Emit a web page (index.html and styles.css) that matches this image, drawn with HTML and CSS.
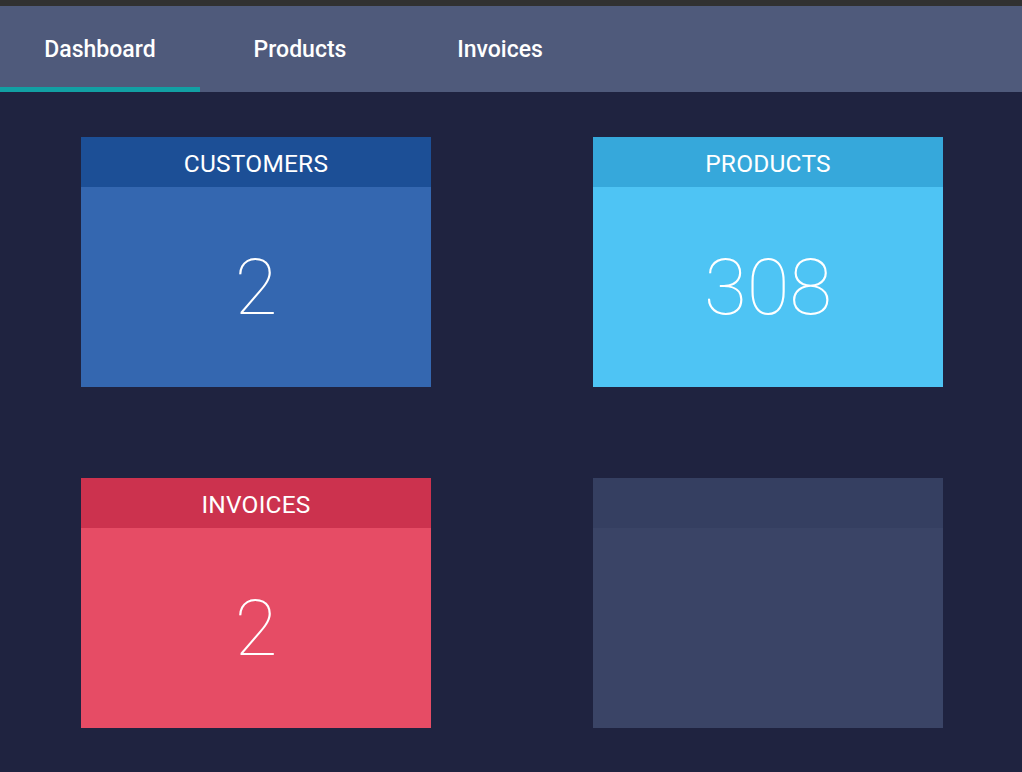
FILE: index.html
```html
<!DOCTYPE html>
<html>
<head>
<meta charset="utf-8">
<link rel="stylesheet" href="styles.css">
</head>
<body>
<div class="topbar"></div>
<nav class="nav">
  <a class="tab active">Dashboard</a>
  <a class="tab">Products</a>
  <a class="tab">Invoices</a>
</nav>
<main class="grid">
  <section class="card blue">
    <header class="card-head">CUSTOMERS</header>
    <div class="card-body">2</div>
  </section>
  <section class="card cyan">
    <header class="card-head">PRODUCTS</header>
    <div class="card-body">308</div>
  </section>
  <section class="card red">
    <header class="card-head">INVOICES</header>
    <div class="card-body">2</div>
  </section>
  <section class="card slate">
    <header class="card-head"></header>
    <div class="card-body"></div>
  </section>
</main>
</body>
</html>
```
FILE: styles.css
```css
html, body {
  margin: 0;
  padding: 0;
  height: 100%;
}
body {
  background: #1f2340;
  font-family: Roboto, "Liberation Sans", sans-serif;
  color: #fff;
  overflow: hidden;
}
.topbar {
  height: 6px;
  background: #313131;
}
.nav {
  display: flex;
  height: 86px;
  background: #4f5a7b;
}
.tab {
  width: 200px;
  display: flex;
  align-items: center;
  justify-content: center;
  font-size: 23px;
  font-weight: 500;
  color: #fff;
  box-sizing: border-box;
  padding-top: 6px;
  border-bottom: 5px solid transparent;
}
.tab.active {
  border-bottom-color: #12a0a4;
}
.grid {
  display: grid;
  grid-template-columns: 350px 350px;
  column-gap: 162px;
  row-gap: 91px;
  padding: 45px 0 0 81px;
}
.card {
  height: 250px;
  display: flex;
  flex-direction: column;
}
.card-head {
  height: 50px;
  box-sizing: border-box;
  padding-top: 3px;
  display: flex;
  align-items: center;
  justify-content: center;
  font-size: 24.5px;
  letter-spacing: 0.2px;
}
.card-body {
  flex: 1;
  display: flex;
  align-items: center;
  justify-content: center;
  box-sizing: border-box;
  padding-top: 0;
  font-size: 78px;
  font-weight: 100;
}
.blue .card-head { background: #1c4f96; }
.blue .card-body { background: #3467b0; }
.cyan .card-head { background: #36a8db; }
.cyan .card-body { background: #4ec4f4; }
.red .card-head { background: #cc324e; }
.red .card-body { background: #e64c65; }
.slate .card-head { background: #353f61; }
.slate .card-body { background: #3a4466; }
```
